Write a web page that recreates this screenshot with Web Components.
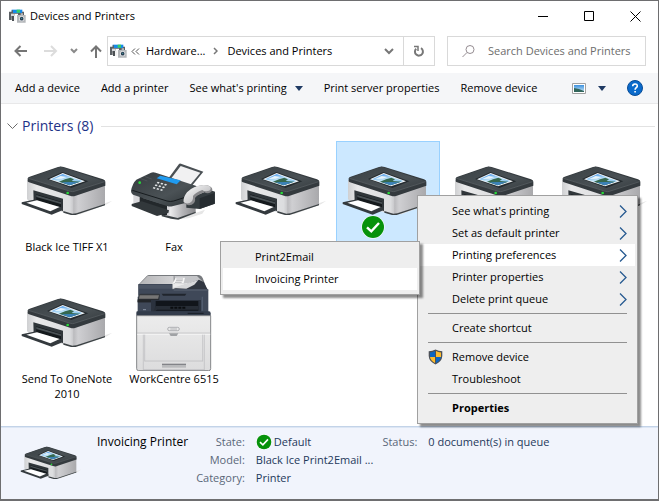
<!DOCTYPE html>
<html lang="en">
<head>
<meta charset="utf-8">
<title>Devices and Printers</title>
<style>
  body { margin: 0; font: 11px/16px "Open Sans", "Noto Sans", sans-serif; color: #000; }
</style>
</head>
<body>
<app-window>
  <title-bar slot="title">Devices and Printers</title-bar>
  <nav-bar slot="nav"></nav-bar>
  <command-bar slot="commands"></command-bar>
  <device-group heading="Printers (8)">
    <device-tile kind="printer">Black Ice TIFF X1</device-tile>
    <device-tile kind="fax">Fax</device-tile>
    <device-tile kind="printer"></device-tile>
    <device-tile kind="printer" selected></device-tile>
    <device-tile kind="printer"></device-tile>
    <device-tile kind="printer"></device-tile>
    <device-tile kind="printer">Send To OneNote 2010</device-tile>
    <device-tile kind="copier">WorkCentre 6515</device-tile>
  </device-group>
  <details-pane slot="details"></details-pane>
  <popup-menu slot="menus" class="main" style="left:416px;top:194px;width:221px">
    <menu-item more>See what's printing</menu-item>
    <menu-item more>Set as default printer</menu-item>
    <menu-item more active>Printing preferences</menu-item>
    <menu-item more>Printer properties</menu-item>
    <menu-item more>Delete print queue</menu-item>
    <menu-line></menu-line>
    <menu-item>Create shortcut</menu-item>
    <menu-line></menu-line>
    <menu-item shield>Remove device</menu-item>
    <menu-item>Troubleshoot</menu-item>
    <menu-line></menu-line>
    <menu-item strong>Properties</menu-item>
  </popup-menu>
  <popup-menu slot="menus" style="left:219px;top:240px;width:200px">
    <menu-item>Print2Email</menu-item>
    <menu-item active>Invoicing Printer</menu-item>
  </popup-menu>
</app-window>

<script>
const RESET = `
  :host { box-sizing: border-box; }
  *, *::before { box-sizing: border-box; }
  button { font: inherit; color: inherit; background: none; border: 0; padding: 0; margin: 0; white-space: nowrap; text-align: left; }
  svg { display: block; flex: none; }
`;
function define(name, css, html) {
  customElements.define(name, class extends HTMLElement {
    constructor() {
      super();
      const root = this.attachShadow({ mode: "open" });
      root.innerHTML = `<style>${RESET}${css}</style>` + (typeof html === "function" ? html(this) : html);
    }
  });
}

const ART = {
  printer: `<svg viewBox="12 -36 288 288" aria-hidden="true">
    <defs>
      <linearGradient id="top" x1="0" y1="0" x2="1" y2="1"><stop offset="0" stop-color="#394044"/><stop offset=".6" stop-color="#4a5155"/><stop offset="1" stop-color="#343a3e"/></linearGradient>
      <linearGradient id="side"><stop offset="0" stop-color="#b9b9bc"/><stop offset=".15" stop-color="#cfcfd2"/><stop offset="1" stop-color="#a9a9ac"/></linearGradient>
      <linearGradient id="front"><stop offset="0" stop-color="#cfd0d2"/><stop offset=".2" stop-color="#e9e9ea"/><stop offset=".9" stop-color="#dcdddf"/><stop offset="1" stop-color="#c2c2c5"/></linearGradient>
      <linearGradient id="sky" x1="0" y1="0" x2=".5" y2="1"><stop offset="0" stop-color="#2f86e6"/><stop offset=".55" stop-color="#bfe3f7"/><stop offset="1" stop-color="#6fb5e8"/></linearGradient>
    </defs>
    <path d="M180 176L272 144L292 137L276 148L196 178Z" fill="#e7e7e7"/>
    <path d="M36 76L36 132Q38 138 60 144L160 177L178 177V112Z" fill="url(#front)"/>
    <path d="M175 112V179L270 150V84Z" fill="url(#side)"/>
    <path d="M145 168L172 176L184 175L270 147V151L182 180L168 180L145 173Z" fill="#3c4245"/>
    <path d="M55 106L144 131V169L134 162L56 140Z" fill="#30363a"/>
    <path d="M64 118L138 140V158L64 137Z" fill="#151a1d"/>
    <path d="M64 120L138 142V147L64 126Z" fill="#4b5256"/>
    <path d="M20 142L56 134L144 158V165L110 179L20 147Z" fill="#343a3e"/>
    <path d="M34 143L66 136L134 156L106 169Z" fill="#fff"/>
    <path d="M38 70Q38 67 44 65L129 36Q137 33 146 36L264 73Q271 76 271 80V92L180 123Q173 125 165 122L42 82Q38 81 38 78Z" fill="#343a3e"/>
    <path d="M40 69L137 35L269 79L178 109Q172 110 165 108Z" fill="url(#top)"/>
    <path d="M40 70L166 109Q172 111 178 109L269 80" fill="none" stroke="#6c7276" stroke-width="1.5"/>
    <path d="M96 72L142 51L220 79L169 99Z" fill="#252b2f"/>
    <path d="M102 73L143 54L210 79L165 94Z" fill="#f2f5f7"/>
    <path d="M108 73L143 57L202 78L164 91Z" fill="url(#sky)"/>
    <path d="M132 80L150 73L166 68L177 73L170 78L196 80L164 91Z" fill="#35684f"/>
    <path d="M140 82L168 81L190 82L164 91Z" fill="#3c82ba"/>
    <path d="M118 72L137 63L154 66L140 71Z" fill="#e8f5fc"/>
    <circle cx="158" cy="114" r="4" fill="#28d93a"/>
  </svg>`,
  fax: `<svg viewBox="3 -36 288 288" aria-hidden="true">
    <defs>
      <linearGradient id="top" x1="0" y1="0" x2="1" y2="1"><stop offset="0" stop-color="#343a3e"/><stop offset=".6" stop-color="#4b5256"/><stop offset="1" stop-color="#2b3134"/></linearGradient>
      <linearGradient id="side"><stop offset="0" stop-color="#eeeeef"/><stop offset=".5" stop-color="#b4b4b7"/><stop offset="1" stop-color="#88888b"/></linearGradient>
      <linearGradient id="hs" x1="0" y1="0" x2="1" y2="1"><stop offset="0" stop-color="#fff"/><stop offset="1" stop-color="#a9a9ac"/></linearGradient>
    </defs>
    <path d="M160 192L240 164L232 176L190 190Z" fill="#e6e6e6"/>
    <path d="M25 100V145Q35 152 60 158L136 186V130Z" fill="#d9d9dc"/>
    <path d="M134 146V188L162 191L212 172V120Z" fill="url(#side)"/>
    <path d="M110 178L158 189L212 170V174L160 194L138 191L110 184Z" fill="#3c4245"/>
    <path d="M44 112L126 138V180L112 180L44 148Z" fill="#23282b"/>
    <path d="M54 124L112 143V148L54 130Z" fill="#596064"/>
    <path d="M20 147L50 139L132 166L130 174L96 183L20 153Z" fill="#32383b"/>
    <path d="M126 76L162 27Q164 24 168 26L235 50L196 98L130 78Z" fill="#4a5054"/>
    <path d="M135 75L167 33L226 53L193 93Z" fill="#f1f1f2"/>
    <path d="M18 108Q22 85 34 74L78 53Q84 51 92 53L212 92Q219 96 214 108L196 140L142 154Q134 156 126 153L24 119Q18 116 18 108Z" fill="url(#top)"/>
    <path d="M22 106L126 138Q136 141 146 138L208 118" fill="none" stroke="#171c1f" stroke-width="3"/>
    <path d="M95 70L106 62L167 76L155 88Z" fill="#209bf0"/>
    <g fill="#e3e6e8"><path d="M98 80l6 2-3 4-6-2zM109 83l6 2-3 4-6-2zM120 86l6 2-3 4-6-2zM92 88l6 2-3 4-6-2zM103 91l6 2-3 4-6-2zM114 94l6 2-3 4-6-2zM86 96l6 2-3 4-6-2zM97 99l6 2-3 4-6-2zM108 102l6 2-3 4-6-2z"/></g>
    <path d="M45 70L67 78M58 64L80 72" stroke="#545b60" stroke-width="2"/>
    <circle cx="44" cy="83" r="4" fill="#28d93a"/>
    <path d="M184 148L210 123L254 104L270 110V146L224 162L184 158Z" fill="#353c40"/>
    <path d="M224 130L268 114V146L224 162Z" fill="#262c30"/>
    <path d="M180 146Q172 140 178 128Q192 102 222 92Q246 86 258 96Q266 104 258 111Q248 118 238 112Q218 119 210 129Q213 143 200 149Q188 153 180 146Z" fill="#88888b"/>
    <path d="M176 140Q174 128 186 112Q204 92 236 90Q254 90 257 98Q258 106 248 108Q238 110 232 105Q212 112 204 123Q206 138 194 144Q182 148 176 140Z" fill="url(#hs)"/>
  </svg>`,
  copier: `<svg viewBox="3 15 288 288" aria-hidden="true">
    <defs>
      <linearGradient id="body" x1="0" y1="0" x2="0" y2="1"><stop offset="0" stop-color="#ececec"/><stop offset="1" stop-color="#dcdcdd"/></linearGradient>
      <linearGradient id="lid" x1="0" y1="0" x2="1" y2="0"><stop offset="0" stop-color="#b5b5b7"/><stop offset="1" stop-color="#d3d3d5"/></linearGradient>
    </defs>
    <path d="M40 44L66 17Q68 15 72 15H222Q230 16 233 24L240 42L244 56V76H40Z" fill="#777a7e"/>
    <path d="M44 42L68 18H146V42Z" fill="url(#lid)"/>
    <path d="M148 18H216L234 36L150 42Z" fill="#c4c5c8"/>
    <path d="M142 56V42L234 36L196 56Z" fill="#ebebec"/>
    <path d="M142 41L152 23H180L176 40Z" fill="#f5f5f5"/>
    <path d="M154 27h20M153 32h20M150 37h20" stroke="#9a9ca0" stroke-width="2"/>
    <path d="M146 56L222 29L236 36L250 62H146Z" fill="#313741"/>
    <path d="M142 54L220 30L208 44L184 56Z" fill="#d7d8da"/>
    <path d="M40 42H142V58H250V128H38V80H40Z" fill="#3f4858"/>
    <path d="M42 45H141V56H42Z" fill="#4c5564"/>
    <path d="M146 60H248" stroke="#6a7484" stroke-width="2"/>
    <path d="M110 71H184L180 77H114Z" fill="#20252d"/>
    <path d="M38 92L42 75Q44 71 48 71H102Q106 71 105 77L102 97H38Z" fill="#33373d"/>
    <path d="M44 76H102L99 86H42Z" fill="#777675"/>
    <path d="M38 88H102V97H38Z" fill="#222529"/>
    <path d="M78 90H228V128H78Z" fill="#2b323e"/>
    <path d="M92 93H220V122H92Z" fill="#11151b"/>
    <path d="M84 126L92 108H220V119H97Z" fill="#272d36"/>
    <path d="M136 113h46" stroke="#0a0c0f" stroke-width="6" stroke-dasharray="9 3"/>
    <path d="M232 80V122" stroke="#515c6e" stroke-width="4"/>
    <path d="M54 119h9" stroke="#8791a0" stroke-width="3"/>
    <path d="M37 124H252Q257 124 257 130V138H34V128Q34 124 37 124Z" fill="#333c4b"/>
    <path d="M188 130H236" stroke="#181d25" stroke-width="3"/>
    <path d="M35 137H257V296Q257 302 251 302H41Q35 302 35 296Z" fill="url(#body)" stroke="#848689" stroke-width="3"/>
    <path d="M36 189H256M55 192V300M59 192V274M233 192V274M238 192V300M59 273H233M55 299H238" fill="none" stroke="#b9babd" stroke-width="2"/>
    <path d="M36 193H256" stroke="#fafafa" stroke-width="2"/>
    <rect x="128" y="172" width="35" height="10" rx="5" fill="#e9e9e9" stroke="#929499" stroke-width="2"/>
    <path d="M136 177H156" stroke="#b5b6b9" stroke-width="3"/>
    <path d="M132 190H160L155 198H137Z" fill="#a0a2a5"/>
    <rect x="111" y="281" width="72" height="12" fill="#b9babc"/>
    <path d="M111 283H183" stroke="#77797d" stroke-width="3"/>
  </svg>`
};
define("device-icon", `:host { display: block; } svg { width: 100%; height: auto; }`,
  el => ART[el.getAttribute("kind")]);

define("check-badge", `:host { display: block; width: 16px; } svg { width: 100%; height: auto; }`,
  `<svg viewBox="0 0 24 24"><circle cx="12" cy="12" r="11.5" fill="#fff"/><circle cx="12" cy="12" r="11" fill="#07920b"/><path d="M6 12.3L10.3 16.3L18 8" fill="none" stroke="#fff" stroke-width="2.4"/></svg>`);

define("folder-glyph", `:host { display: block; width: 17px; } svg { width: 100%; height: auto; }`,
  `<svg viewBox="0 0 51 42"><path d="M8 2H40V12H8Z" fill="#1689e8"/><path d="M23 2H33V11H23Z" fill="#36d063"/><path d="M0 8H8V4H12V12H39V8H45V20H27V14H17V25H8V33H0Z" fill="#5b6064"/><path d="M6 14H17V22H6Z" fill="#d6d8da"/><path d="M9 21H15V36H9Z" fill="#4b5054"/><path d="M15 20H22V35H15Z" fill="#f2f2f2"/><path d="M24 18H35V13H42V18H50V41H24Z" fill="#b4b7ba"/><circle cx="38" cy="29" r="8" fill="#e5e6e8"/><circle cx="38" cy="29" r="5.5" fill="#263e52"/><circle cx="38" cy="28" r="2" fill="#4e9ba3"/></svg>`);

define("app-window", `
  :host { position: relative; display: flex; flex-direction: column; min-height: 100vh; background: #fff; border: 1px solid #6e6e70; border-bottom-width: 2px; overflow: hidden; }
  main { flex: 1; }
`, `<slot name="title"></slot><slot name="nav"></slot><slot name="commands"></slot><main><slot></slot></main><slot name="details"></slot><slot name="menus"></slot>`);

define("title-bar", `
  :host { display: flex; align-items: center; height: 30px; padding-left: 8px; }
  .name { flex: 1; margin-left: 4px; }
  button { width: 46px; height: 28px; display: grid; place-items: center; }
  .controls { display: flex; }
`, `<folder-glyph></folder-glyph><span class="name"><slot></slot></span>
  <span class="controls">
    <button aria-label="Minimize"><svg width="11" height="11"><path d="M0 5.5H10" stroke="#000"/></svg></button>
    <button aria-label="Maximize"><svg width="11" height="11"><path d="M.5 .5H9.5V9.5H.5Z" fill="none" stroke="#000"/></svg></button>
    <button aria-label="Close"><svg width="11" height="11"><path d="M.5 .5L10.5 10.5M10.5 .5L.5 10.5" stroke="#000"/></svg></button>
  </span>`);

define("nav-bar", `
  :host { display: flex; align-items: center; height: 42px; padding: 0 12px 2px; }
  .arrows { display: flex; align-items: center; width: 94px; padding-left: 1px; gap: 12px; }
  .arrows button { flex: none; }
  .address { flex: 1; display: flex; align-items: center; height: 30px; border: 1px solid #d9d9d9; padding-left: 2px; }
  .address .caret { margin-left: auto; width: 28px; display: grid; place-items: center; }
  .sep { margin: 0 9px 0 8px; }
  .first { margin: 0 6px 0 4px; }
  .refresh { width: 31px; height: 28px; border-left: 1px solid #d9d9d9; display: grid; place-items: center; }
  label { display: flex; align-items: center; width: 199px; height: 30px; margin-left: 12px; border: 1px solid #d9d9d9; padding-left: 14px; }
  input { flex: 1; min-width: 0; margin-left: 13px; padding: 0; border: 0; outline: 0; background: none; font: inherit; color: #6d6d6d; }
  input::placeholder { color: #6d6d6d; opacity: 1; }
`, `<span class="arrows">
    <button aria-label="Back"><svg width="14" height="12" fill="none" stroke="#757575" stroke-width="2"><path d="M13 6H2M6.500 1L1.500 6L6.500 11"/></svg></button>
    <button aria-label="Forward" style="margin-left:4px"><svg width="14" height="12" fill="none" stroke="#dcdcdc" stroke-width="2"><path d="M0 6H11M7 1L12 6L7 11"/></svg></button>
    <button aria-label="Recent locations"><svg width="8" height="6" fill="none" stroke="#8a8a8a" stroke-width="2"><path d="M1 1L4 4L7 1"/></svg></button>
    <button aria-label="Up"><svg width="12" height="13" fill="none" stroke="#757575" stroke-width="2"><path d="M6 13V2M1 6.500L6 1.500L11 6.500"/></svg></button>
  </span>
  <span class="address">
    <folder-glyph></folder-glyph>
    <svg class="first" width="9" height="7" fill="none" stroke="#555"><path d="M4 .5L1 3.500L4 6.500M8 .5L5 3.500L8 6.500"/></svg>
    <button>Hardware...</button>
    <svg class="sep" width="5" height="8" fill="none" stroke="#777" stroke-width="1.500"><path d="M1 1L4 4L1 7"/></svg>
    <button>Devices and Printers</button>
    <button class="caret" aria-label="Previous locations"><svg width="10" height="7" fill="none" stroke="#777" stroke-width="2"><path d="M1 1L5 5L9 1"/></svg></button>
    <button class="refresh" aria-label="Refresh"><svg width="12" height="12" fill="none" stroke="#777" stroke-width="2"><path d="M8 3.200A4 4 0 1 1 3.200 3.700"/><path d="M1 1.500H5V6" stroke-width="1.500"/></svg></button>
  </span>
  <label><svg width="13" height="13" fill="none" stroke="#958d92"><circle cx="8" cy="4.500" r="4"/><path d="M5 7.500L.5 12"/></svg>
    <input type="text" aria-label="Search" placeholder="Search Devices and Printers"></label>`);

define("command-bar", `
  :host { display: flex; align-items: center; height: 31px; padding: 0 15px 0 14px; gap: 21px; background: #f5f6f8; border-bottom: 1px solid #e8e8e9; }
  button { display: flex; align-items: center; gap: 8px; height: 28px; }
  .view { margin-left: auto; gap: 12px; }
`, `<button>Add a device</button><button>Add a printer</button>
  <button>See what's printing <svg width="8" height="5"><path d="M0 0H8L4 5Z" fill="#1f3a63"/></svg></button>
  <button>Print server properties</button><button>Remove device</button>
  <button class="view" aria-label="Change view"><svg width="14" height="11"><defs><linearGradient id="g" x1="0" y1="0" x2="0" y2="1"><stop offset="0" stop-color="#3d91de"/><stop offset="1" stop-color="#cfeaf8"/></linearGradient></defs><path d="M.5 .5H13.500V10.500H.5Z" fill="#fff" stroke="#a1a1a1"/><path d="M2 2H12V9H2Z" fill="url(#g)"/><path d="M2 5L7 6L12 8V9H2Z" fill="#32665c"/></svg><svg width="8" height="5"><path d="M0 0H8L4 5Z" fill="#1f3a63"/></svg></button>
  <button aria-label="Help"><svg width="16" height="16" viewBox="0 0 16 16"><circle cx="8" cy="8" r="7.500" fill="#0a6acb" stroke="#084c97"/><path d="M5.700 6.200C5.700 3.300 10.300 3.300 10.300 5.900C10.300 7.600 8.100 7.700 8.100 9.700M8.100 11V12.600" fill="none" stroke="#fff" stroke-width="1.600"/></svg></button>`);

define("device-group", `
  :host { display: block; padding: 12px 3px 12px 6px; }
  header { display: flex; align-items: center; gap: 8px; height: 20px; }
  h2 { display: flex; margin: 0; font-size: 14px; font-weight: 400; color: #1e3287; }
  h2 button { display: flex; align-items: center; gap: 4px; }
  header::after { content: ""; flex: 1; height: 1px; background: #e2e2e2; }
  .grid { display: grid; grid-template-columns: repeat(auto-fill, 104px); gap: 2px 3px; padding: 5px 0 0 8px; }
`, el => `<header><h2><button><svg width="11" height="7" fill="none" stroke="#6c6c6c"><path d="M.5 .5L5.500 5.500L10.500 .5"/></svg>${el.getAttribute("heading")}</button></h2></header><div class="grid"><slot></slot></div>`);

define("device-tile", `
  :host { position: relative; display: flex; flex-direction: column; align-items: center; min-height: 130px; padding: 2px 1px; text-align: center; line-height: 15px; }
  :host([selected]) { background: #cce8ff; box-shadow: inset 0 0 0 1px #99d1ff; }
  device-icon { width: 96px; }
  check-badge { position: absolute; top: 74px; left: 25px; width: 24px; }
`, el => `<device-icon kind="${el.getAttribute("kind")}"></device-icon><span><slot></slot></span>${el.hasAttribute("selected") ? "<check-badge></check-badge>" : ""}`);

define("details-pane", `
  :host { display: flex; min-height: 71px; padding: 3px 16px 4px; gap: 16px; background: #f1f4fc; border-top: 1px solid #c3d3e8; box-shadow: inset 0 1px #dce6f4; color: #1e395b; }
  device-icon { width: 64px; flex: none; margin: 1px -2px 0 2px; }
  h3 { margin: 3px 0 0; font: inherit; font-size: 12px; line-height: 18px; color: #000; white-space: nowrap; }
  dl { display: grid; grid-template-columns: auto auto; grid-auto-rows: 18px; gap: 0 11px; align-items: center; margin: 3px 0 0; line-height: 18px; white-space: nowrap; }
  dt { color: #5a6779; text-align: right; }
  dd { display: flex; align-items: center; gap: 2px; margin: 0; }
  .state { margin-left: -8px; }
  .status { margin-left: -7px; }
`, `<device-icon kind="printer"></device-icon><h3>Invoicing Printer</h3>
  <dl class="state"><dt>State:</dt><dd><check-badge></check-badge>Default</dd><dt>Model:</dt><dd>Black Ice Print2Email ...</dd><dt>Category:</dt><dd>Printer</dd></dl>
  <dl class="status"><dt>Status:</dt><dd>0 document(s) in queue</dd></dl>`);

define("popup-menu", `
  :host { position: absolute; display: block; padding: 4px 2px; background: #eee; border: 1px solid #a0a0a0; box-shadow: 3px 3px 2px rgba(0, 0, 0, .45); }
`, `<slot></slot>`);

define("menu-line", `:host { display: block; height: 7px; padding: 3px 8px; } hr { margin: 0; border: 0; height: 1px; background: #919191; }`, `<hr>`);

define("menu-item", `
  :host { display: block; }
  :host([active]) { background: #fff; }
  :host([strong]) { font-weight: 700; }
  button { display: flex; align-items: center; width: 100%; height: 22px; padding: 0 8px; }
  .mark { width: 24px; }
  .more { margin-left: auto; }
`, el => `<button><span class="mark">${el.hasAttribute("shield") ? `<svg width="15" height="16" viewBox="0 0 15 16"><path d="M7.500 .5Q10.500 2.300 14.300 2.300V7Q14 12.500 7.500 15.500Q1 12.500 .7 7V2.300Q4.500 2.300 7.500 .5Z" fill="#4c5158"/><path d="M7 2Q5 3.200 2 3.400V8H7Z" fill="#0b66c3"/><path d="M8 2Q10 3.200 13 3.400V8H8Z" fill="#fdbb2d"/><path d="M2 8H7V14Q2.500 11.500 2 8Z" fill="#fdbb2d"/><path d="M13 8H8V14Q12.500 11.500 13 8Z" fill="#0b66c3"/></svg>` : ""}</span><slot></slot>${el.hasAttribute("more") ? `<svg class="more" width="8" height="13" fill="none" stroke="#275a91" stroke-width="1.300"><path d="M1 .5L7 6.500L1 12.500"/></svg>` : ""}</button>`);
</script>
</body>
</html>
